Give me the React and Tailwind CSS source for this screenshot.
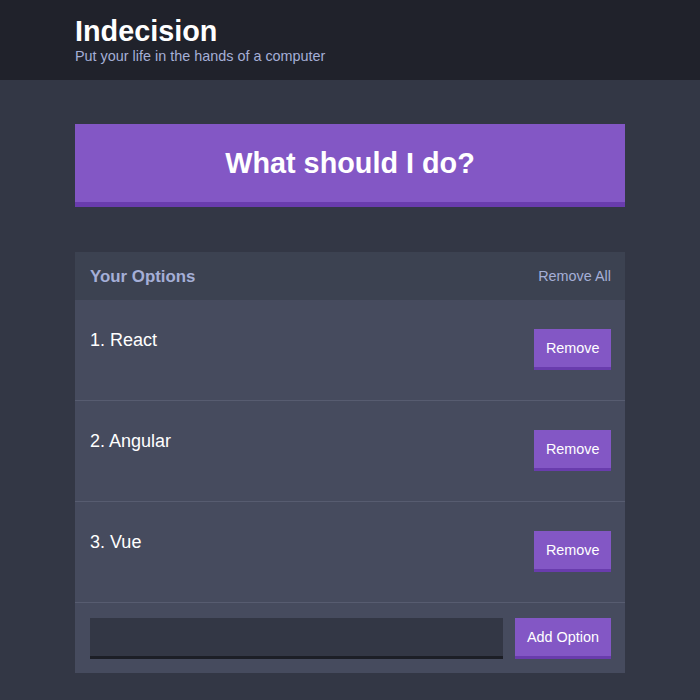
import React from 'react';

const options = ['React', 'Angular', 'Vue'];

export default function App() {
  return (
    <div className="min-h-screen bg-[#333745] font-['Liberation_Sans',Arial,sans-serif] text-white">
      {/* Header */}
      <header className="bg-[#20222b]">
        <div className="max-w-[550px] mx-auto pt-[15px] pb-[15px]">
          <h1 className="text-[28.8px] leading-[33px] font-bold text-white">Indecision</h1>
          <p className="text-[14.4px] leading-[17px] text-[#a5afd7]">Put your life in the hands of a computer</p>
        </div>
      </header>

      <div className="max-w-[550px] mx-auto">
        {/* Big button */}
        <button className="mt-[44px] w-full bg-[#8357c5] border-b-[5px] border-[#693cad] pt-[23px] pb-[22px] text-[28.8px] leading-[33px] font-bold text-white">
          What should I do?
        </button>

        {/* Widget */}
        <div className="mt-[45px] bg-[#464b5e]">
          <div className="h-[48px] bg-[#3c4251] pl-[15px] pr-[14px] flex items-center justify-between">
            <h3 className="text-[16.85px] leading-[19px] font-bold text-[#a5afd7]">Your Options</h3>
            <button className="text-[14.4px] leading-[17px] text-[#a5afd7]">Remove All</button>
          </div>

          {options.map((opt, i) => (
            <div
              key={opt}
              className="flex items-start justify-between pl-[15px] pr-[14px] pt-[29px] pb-[30px] border-b border-[#575c70]"
            >
              <p className="mt-[1px] text-[18px] leading-[21px] text-white">
                {i + 1}. {opt}
              </p>
              <button className="h-[41px] px-[11.5px] bg-[#8357c5] border-b-[3px] border-[#693cad] text-[14.4px] leading-[16px] text-white">
                Remove
              </button>
            </div>
          ))}

          {/* Add option */}
          <form className="flex gap-[12px] pl-[15px] pr-[14px] pt-[15px] pb-[14px]" onSubmit={(e) => e.preventDefault()}>
            <input
              type="text"
              className="flex-1 h-[41px] bg-[#333745] border-b-[3px] border-[#1c1e26] px-[11px] text-[14.4px] text-[#a5afd7] outline-none"
            />
            <button className="h-[41px] px-[12px] bg-[#8357c5] border-b-[3px] border-[#693cad] text-[14.4px] leading-[16px] text-white">
              Add Option
            </button>
          </form>
        </div>
      </div>
    </div>
  );
}
